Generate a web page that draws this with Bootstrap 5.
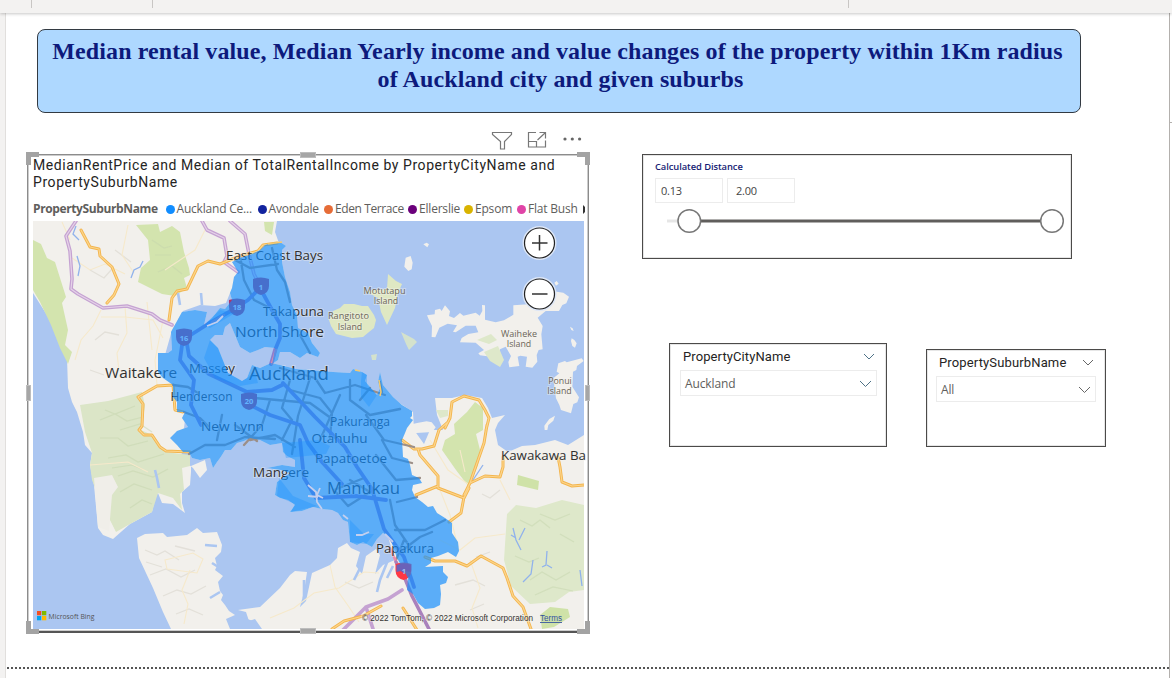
<!DOCTYPE html>
<html lang="en">
<head>
<meta charset="utf-8">
<meta name="viewport" content="width=device-width, initial-scale=1">
<title>Auckland rental report</title>
<link href="https://cdn.jsdelivr.net/npm/bootstrap@5.3.0/dist/css/bootstrap.min.css" rel="stylesheet">
<style>
body{background:#fff;font-family:"Open Sans","Noto Sans",sans-serif;color:#252423;line-height:1.2}
.ribbon{height:13px;background:#f3f2f1;flex:none;box-shadow:0 1px 3px rgba(0,0,0,.22);z-index:2}
.ribbon i{width:1px;height:8px;background:#c8c6c4}
.gutter{width:6px;background:#f3f2f1;border-right:1px solid #e1dfdd}
.pane{width:3px;border-left:1px solid #b3b0ad}
.pane div{margin-top:109px;height:1px;background:#b3b0ad}
.banner{width:1044px;height:84px;margin:16px 0 0 31px;background:#aed8ff;border:1px solid #333a42;border-radius:8px;font:bold 24px/28px "Liberation Serif",serif;letter-spacing:.11px;color:#0d1a7c;padding:7px 3px 0 0;white-space:nowrap}
.banner span{padding-left:6px}
.lower{padding-left:21px;height:554px}
.visual{width:562px}
.tools{height:41px;padding:18px 6px 0 0;gap:14px}
.frame{height:479px;border:1px solid #8c8c8c;border-bottom:2px solid #555;box-shadow:inset 0 0 0 1px #ccc;padding:2px 3px 0 5px}
.hnd{position:absolute;background:#a6a6a6;border:1px solid #bdbdbd}
.cnr{position:absolute;width:13px;height:13px;border:0 solid #a3a3a3}
.din{font-family:Roboto,sans-serif;font-size:14px;line-height:17px;letter-spacing:.57px}
.legendrow{height:18px;font-size:12px;line-height:18px;color:#605e5c;margin-top:9px;letter-spacing:-.2px}
.legendrow b{letter-spacing:-.38px}
.dot{width:9px;height:9px;border-radius:50%;margin-right:2px;flex:none}
.side{margin-left:53px;padding-top:41px}
.box{border:1px solid #4b4a49;outline:1px solid #e6e6e6;outline-offset:-2px;background:#fff}
.dist{width:430px;height:105px;padding:5px 7px 0 12px}
.dist label{font-size:9.4px;line-height:14px;font-weight:600;color:#151b73;letter-spacing:-.08px}
.num{width:68px;height:25px;border:1px solid #ececec;font-size:11px;line-height:23px;padding-left:5px;color:#444;letter-spacing:-.25px}
.city{width:218px;height:104px;margin-left:27px;padding:4px 9px 0 10px}
.suburb{width:180px;height:98px;margin:6px 0 0 39px;padding:4px 9px 0 9px}
.pick{height:26px;border:1px solid #ececec;font-size:12px;color:#605e5c;padding:2px 4px 0 4px;margin-top:4px;letter-spacing:-.13px}
.pick span{padding-top:1px}
.hd{padding:0 2px 0 3px;font-size:13px;letter-spacing:.14px;line-height:18px}
.city .hd{letter-spacing:.1px}
.cut{border-top:2px dotted #555;margin-left:1px}
svg text{font-family:"Open Sans","Noto Sans",sans-serif}
.halo{paint-order:stroke;stroke:#f5f3ee;stroke-width:2px;stroke-opacity:.4}
.credit text{font-family:"Liberation Sans",sans-serif}
</style>
</head>
<body class="d-flex flex-column vh-100 overflow-hidden">
<header class="ribbon d-flex position-relative"><i style="margin-left:31px"></i><i style="margin-left:120px"></i><i style="margin-left:695px"></i></header>
<div class="d-flex flex-grow-1">
<div class="gutter"></div>
<main class="flex-grow-1">
<h1 class="banner text-center mb-0">Median rental value, Median Yearly income and value changes of the property within 1Km radius<br><span>of Auckland city and given suburbs</span></h1>
<div class="lower d-flex">
<section class="visual">
<div class="tools d-flex justify-content-end align-items-start">
<svg width="22" height="20" fill="none" stroke="#777"><path d="M1.500 1.500h19v2l-7 7v7.500h-4v-7.500l-8-7z" stroke-width="1.200"/></svg>
<svg width="20" height="18" fill="none" stroke="#777" stroke-width="1.200"><path d="M9 1.500H1.500v14.500h17V9.500M1.500 10.500h8V16M10.500 9L18 2M12.500 1.500h6v6"/></svg>
<svg width="22" height="18" fill="#666"><circle cx="4" cy="8" r="1.600"/><circle cx="11.300" cy="8" r="1.600"/><circle cx="18.600" cy="8" r="1.600"/></svg>
</div>
<div class="frame position-relative">
<div class="din">MedianRentPrice and Median of TotalRentalIncome by PropertyCityName and<br>PropertySuburbName</div>
<div class="legendrow d-flex align-items-center text-nowrap overflow-hidden">
<b style="width:132.500px">PropertySuburbName</b>
<span class="dot" style="background:#118dff"></span><span style="width:81px">Auckland Ce...</span>
<span class="dot" style="background:#12239e"></span><span style="width:55.500px">Avondale</span>
<span class="dot" style="background:#e66c37"></span><span style="width:73px;letter-spacing:-.4px">Eden Terrace</span>
<span class="dot" style="background:#6b007b"></span><span style="width:45px">Ellerslie</span>
<span class="dot" style="background:#d9b300"></span><span style="width:42px">Epsom</span>
<span class="dot" style="background:#e044a7"></span><span style="width:53px">Flat Bush</span>
<svg width="4" height="9"><path d="M2 0v9l2-2V2z" fill="#333"/></svg>
</div>
<svg class="d-block overflow-visible" style="margin-top:3px" width="551" height="408" viewBox="33 221 551 408">
<defs><clipPath id="edge"><path d="M33 221h551v408H33z"/></clipPath>
<path id="area" d="M240 258L252 254 260 250 265 245 272 243 280 242 286 246 282 250 282 262 285 277 290 292 292 305 297 315 298 328 308 333 312 343 320 353 318 357 307 353 300 358 290 352 280 352 278 360 272 364 275 348 265 347 258 350 250 353 240 347 235 335 230 323 225 327 223 335 215 335 210 340 218 348 222 358 228 373 242 381 247 378 252 365 260 368 271 363 280 365 296 369 310 370 333 372 350 373 353 369 362 372 367 375 365 381 371 388 377 395 380 388 378 382 380 372 383 385 393 397 402 405 412 411 412 416 410 418 413 420 407 428 405 433 402 440 403 457 408 459 410 465 412 475 419 478 422 483 413 485 412 490 415 497 422 502 428 507 433 506 437 513 445 518 452 523 452 533 458 542 459 551 456 557 448 552 438 556 431 558 431 563 425 567 443 566 443 572 448 577 446 583 440 585 441 594 440 605 434 608 425 609 418 603 413 594 407 590 408 578 402 567 397 558 390 538 383 533 377 539 372 547 363 542 357 545 350 542 348 522 343 520 338 513 332 510 322 509 313 507 302 511 290 512 295 505 288 500 280 498 275 495 277 482 290 473 281 470 267 468 282 465 295 467 295 460 287 456 283 452 282 443 270 445 260 440 250 438 244 441 237 443 231 450 225 450 222 455 220 458 217 462 213 468 210 458 200 460 192 458 189 452 183 452 177 445 170 438 177 431 188 427 182 418 185 412 177 412 177 402 173 397 173 385 163 378 158 372 158 353 168 353 172 350 171 332 182 312 195 310 207 312 204 325 212 318 220 308 225 309 232 300 230 293 232 288 234 277 238 272 232 262z"/></defs>
<rect x="33" y="221" width="551" height="408" fill="#abc6f1"/>
<g clip-path="url(#edge)">
<g fill="#f2f0ec">
<path d="M33 221L277 221 275 232 280 246 262 262 238 272 236 282 230 293 226 303 215 306 200 305 183 311 172 330 165 355 182 378 186 412 184 428 180 445 183 460 193 468 200 478 207 470 205 460 191 466 191 472 190 485 182 492 182 503 185 513 173 504 162 503 158 493 155 498 152 512 130 524 113 539 103 535 98 528 94 485 90 465 92 453 85 445 83 432 77 412 72 402 68 388 67 358 63 347 47 315 33 293z"/>
<path d="M137 538L145 534 163 533 167 537 187 535 197 528 203 533 217 532 222 545 221 552 215 558 217 566 215 570 223 576 218 582 220 591 223 595 221 600 225 605 229 611 235 615 226 619 230 629 171 629 163 612 153 588 139 558z"/>
<path d="M238 610L260 607 280 588 290 575 295 571 307 572 304 592 300 607 306 601 312 573 330 565 337 558 338 548 347 543 351 548 360 552 356 566 362 574 366 556 376 549 380 555 375 574 383 565 395 560 380 510 395 400 413 412 414 430 424 444 430 430 443 430 437 415 435 398 452 398 465 395 482 398 488 408 492 418 505 415 498 423 495 430 498 445 508 452 522 446 535 445 555 440 568 445 584 435 584 629 262 629 255 619 249 621 246 612z"/>
<use href="#area" fill="#e9e9e9"/>
</g>
<g transform="translate(395 215) scale(.33333)" fill="#f2f0ec">
<path d="M120 285l15-4 5 7 10-17 15 18-3 14 15 6 18-15 10 8 37-9 12 9 8-14-1-18 9 1 0 43 32 8 25-6 28-17 0-28 45-3 30-20 40-20 35 5 17 12-8 20-12 5-10 18-40 0-24 20 15 25-4 25 4 45-12 2-6 15 2 20-15 18-20-3 4-30-20-3-8 3 5 28-30 4-3-16 8-18-16-28-17 8-5 25-55-7-5-6 17-10-25-22-47-1 5-13 20-12 30-5-8-20-30 0-30 20-8-2 12-19-28-5-25 12-12 29-11-1 1-33-10-20-5-12 23-3z"/>
<path d="M490 445l20-7 5 4 45-12 6 8-20 15-2 12-10 5-2 45 20 32-5 15-12 5-7 28-30-10-5-15-10-20-8-60 18-15-8-5z"/>
<path d="M32 128l15-5 6 20-3 20-10 5-12-13zM85 88l10-5 7 5-5 9zM478 203l7-5 6 8-8 6zM525 335l8 5 3 8-7-3zM530 370l8 5 7 10-5 13-8-5-4-15zM448 632l15-20 17-10-5 15-15 13-3 15-8 0zM50 628l20-5 25-4 15 3 12 15-10 14-60 4z"/>
</g>
<g fill="#dfe8c3"><path d="M329 320l3-5 1-4 7-3 4-4 10 0 8 2 6 0 6 9 2 5-2 8-5 4-6 5-11 1-8-2-8-2-5-8z"/><path d="M365 291l22-2 1-15 8 7 6 3-4 9-3 15-8 17-6-13-3-14z"/><path d="M401 332l13 7 3 3-8 8-3-6zM371 355l6-1-1 6-4 0z" opacity=".8"/></g>
<g fill="#d3e4ae">
<path d="M33 240L41 244 47 258 55 262 66 297 62 303 68 330 65 345 72 352 68 364 60 348 51 325 40 302 33 290z"/>
<path d="M136 225L158 224 160 232 172 226 180 232 184 252 189 268 190 275 184 278 187 288 175 296 162 294 138 282 141 268 150 260 148 240z"/>
<path d="M264 222l10 0-2 13-7-4z"/>
<path d="M467 412L475 402 483 408 483 430 476 434 480 450 478 465 469 487 456 470 442 450 445 440 455 434 454 424z"/>
</g>
<path d="M80 405L108 401 142 392 145 406 141 430 154 436 165 452 190 455 190 466 182 468 184 490 180 494 182 510 173 498 158 493 152 512 130 524 116 532 109 518 108 505 96 490 92 480 90 465 92 453 85 432z" fill="#dbe5c7"/>
<path d="M94 478l18-3 6 12-6 8 -3 36-11-4z" fill="#f0eee9"/>
<g fill="#dee8ca"><path d="M507 514L516 505 536 508 562 500 584 505 584 590 569 592 555 602 530 604 511 586 504 560z"/><path d="M518 475l21 6-1 9-21-5z" fill="#cfe2a8"/><path d="M540 615l10-8 18 2 2 8-16 10-12 2z" fill="#cfe2a8"/><path d="M436 410l12 0 0 6-8 2zM477 340l14-6 6 6-8 4zM484 352l14-6 6 14-4 7-10-6z"/></g>
<g fill="none" stroke="#c5d5ae" stroke-width="1.200" opacity=".5"><path d="M100 420l15-6 12 7 16-4M100 438l18 0 10 8 20-5M108 458l18-3 12 7 26-8M118 476l15-5 20 6 15-8M120 492l14-8 18 6M130 508l12-8 10 4M105 410l10 4 20-8M120 430l20-6 12 8M112 468l20-3 10 4M520 520l12 6 8-6 10 8M540 514l15 6 15-6M530 580l12-8 14 8 14-8M535 595l18-8 20 4M515 556l14 6 10-4M560 534l14 8M152 240l12 8 8-2M158 272l14-6 10 8M155 255l16 0"/></g>
<g fill="none" stroke="#e3e0d9" stroke-width="1.300"><path d="M145 550l12 5 8-4 14 9M150 575l16-6 15 8 14-7M163 596l14-6 14 4 15-8M176 614l13-5 14 6M90 270l14 8 8-9M95 340l10-8 14 3M90 370l14 5M500 490l-10 8-8-4M455 585l18-5 12 6M470 610l14-6M115 250l16 12M490 552l-14 5M345 582l14 6 14-6M146 562l16 5M175 546l20 5"/></g>
<!-- minor roads -->
<g fill="none" stroke="#f6e9cb" stroke-width="1.100"><path d="M101 310l-8 16-12 14-6 20M101 317l24 0 28 3 10 18M125 307l2 26-10 20 2 18M72 258l18 12 15-6 20 10M128 225l-6 30 12 18M62 222l8 18M147 302l5 48M163 320l-8 40 2 25M205 230l-10 20-30 20M90 465l38-3 20 10M165 560l28-7 10 6-6 14-30-4zM190 570l-8 20 6 14-4 20M270 618l24-10 20-15 25-5 25-16 15 1M330 565l5 22 14 20 10 15M440 490l10 25 8 32M460 450l5 22M440 540l20 10 15-12 30-4M470 560l10 28-8 20 6 20M500 480l10 20M430 440l18 30 20 14"/></g>
<g fill="none" stroke="#90b2ec" stroke-width="1.300"><path d="M76 226l-3 8 6 6M77 256l3 10-2 10M131 278l3-8 6-3 3-6M513 528l3 12 5 10M525 528l-6 12M516 538l-5-3M547 551l-1 14-4 2M552 568l-5-3M533 560l-2 14-8 8M580 570l2 16M483 465l-10 15"/><path d="M155 470l2 8 2 10M363 550l-3 18-6 12M388 560l-8 20-3 12M393 566l-6 12M304 580l0 18M178 293l2 12M201 293l1 12M205 545l12 1M212 563l8 5M210 598l10-6M240 618l12 4" stroke="#abc6f1" stroke-width="2.600"/></g>
<!-- highways -->
<g fill="none" stroke-linejoin="round" stroke-linecap="round">
<g stroke="#c5a2d2" stroke-width="3.600"><path id="mway" d="M76 221l-10 15 4 15 2 28-1 10 7 5 25 14 24-2 25 8 8 6 12 5M202 221l5 9 17 8 3 18 -3 6 14 10M230 221l15 13 4 20 5 20 6 12"/><path d="M336 637l30-30 22-8 14-9M366 607l8 25"/></g>
<use href="#mway" stroke="#e5d3e8" stroke-width="1.200"/>
<g stroke="#f3b54e" stroke-width="3"><path id="hway" d="M81 230l9 17 9 2 1 7 12 11 7 17-5 11-7 8M169 320l3-22 5-7 10-2 11-23 10-5 12 3 20-8 18-5 5-6 14-2M173 385l-16 1-19 11 5 7 -1 22-3 4 5 5 8 0 8 12 6 4 24 1M173 385l2 25 8 2M445 428l5-10 2-16 12-6 15 4 6 10 4 8-3 12M487 425l-3 18-14 40-6 12M470 483l15-7 15 1 3-10 0-10M402 440l12 9 8 0 12-3 5-16 9-8M418 449l2 6 18 21 0 12 26 10 5-10M438 486l-22 9M464 497l-3 16-12 9M425 557l10 4 20 0 12 5 14-10 22 12 4 10 6 18 10 11 8 22M558 457l2 10 2 15 10 4 12-1M332 629l12-8 19-5 18-10M403 608l14 22"/></g>
<use href="#hway" stroke="#fcd58c" stroke-width="1.200"/>
<g stroke="#9c8f88" stroke-width="2.300"><path d="M173 385l15 2 10 6M184 412l16 6 8 8M189 454l16-9 20 0 20-8 30 2M280 368l35 10 10 15 30-8 30 10M250 440l25-5 20 12M290 390l30 8 12 15-2 25M240 255l4 25 10 20 20 10M272 248l5 22 8 12 5 20M235 260l15 8 28-4M350 380l0 20 20 15 30-6M366 415l18 25 30 7M376 455l20 25 24-2M350 480l20 12-22 14-14-16 30-12M390 500l5 25 15 22M397 502l20-5M412 463l-20-5-10-18M395 530l30 0 20-10M400 552l20-15 12-5M290 380l-8 28 10 12-10 20M255 398l55 5 25 18M310 378l-12 38-6 38M270 400l-8 25-18 20M340 395l-20 45M235 425l22 16M222 415l-5 25M300 335l10 18M380 382l2 10M404 540l-8 20M360 400l10-12"/></g>
<g stroke="#8a7fce" stroke-width="3.800"><path d="M260 288l-12 12-12 8-28 16-22 14 3 18 20 18 38 18 25-2 12-6M260 288l12 22 8 14 0 14-5 12-4 14M250 405l20 10 30 10 8 18 14 19 20 22M283 383l32 34 30 30 12 20 15 22 12 40 20 28 10 30M183 338l-3 22 14 20-3 25 10 20M300 440l4 38 12 20 40-2 30 4"/></g>
<path d="M212 322l12-7M276 350l-4 14M390 548l8 18M230 301l6 4" stroke="#ef8aa8" stroke-width="2.500"/>
<path d="M396 562l8 14 8 20 18 35" stroke="#a981bc" stroke-width="3.500"/>
</g>
<g fill="#b0356b"><path id="shield" d="M253 279q8-3 16 0v7q0 7-8 9q-8-2-8-9z"/><use href="#shield" x="-24" y="21"/><use href="#shield" x="-77" y="51"/><use href="#shield" x="-12" y="115"/><path d="M395.500 564q8-3 16 0v6q0 8-8 10q-8-2-8-10z" fill="#ff3844"/></g>
<g font-weight="700" font-size="7.500" fill="#fff" text-anchor="middle"><text x="261" y="289.500">1</text><text x="237" y="310">18</text><text x="184" y="340.500">16</text><text x="249" y="404">20</text></g>
</g>
<!-- place names sit beneath the shaded area -->
<g fill="#303030" class="halo" font-size="13">
<text x="226" y="260" textLength="97" lengthAdjust="spacingAndGlyphs">East Coast Bays</text>
<text x="263" y="315.500" textLength="61" lengthAdjust="spacingAndGlyphs">Takapuna</text>
<text x="235" y="336.500" font-size="14.500" textLength="89" lengthAdjust="spacingAndGlyphs">North Shore</text>
<text x="105" y="377.500" font-size="14.500" textLength="72" lengthAdjust="spacingAndGlyphs">Waitakere</text>
<text x="189" y="373" textLength="46" lengthAdjust="spacingAndGlyphs">Massey</text>
<text x="249" y="379.500" font-size="18.500" textLength="80" lengthAdjust="spacingAndGlyphs">Auckland</text>
<text x="170.500" y="401" font-size="12" textLength="62" lengthAdjust="spacingAndGlyphs">Henderson</text>
<text x="201" y="431" textLength="63" lengthAdjust="spacingAndGlyphs">New Lynn</text>
<text x="330" y="426" font-size="12" textLength="60" lengthAdjust="spacingAndGlyphs">Pakuranga</text>
<text x="311.500" y="443" textLength="56" lengthAdjust="spacingAndGlyphs">Otahuhu</text>
<text x="315" y="463" textLength="72" lengthAdjust="spacingAndGlyphs">Papatoetoe</text>
<text x="253" y="477" textLength="56" lengthAdjust="spacingAndGlyphs">Mangere</text>
<text x="327" y="494" font-size="16" textLength="73" lengthAdjust="spacingAndGlyphs">Manukau</text>
<text x="376" y="553" textLength="58" lengthAdjust="spacingAndGlyphs">Papakura</text>
<text x="501" y="460" textLength="85" lengthAdjust="spacingAndGlyphs">Kawakawa Ba</text>
</g>
<g fill="#6b6558" class="halo" font-size="8.800" text-anchor="middle">
<text x="384.500" y="293.500" textLength="42" lengthAdjust="spacingAndGlyphs">Motutapu</text><text x="386" y="304">Island</text><text x="348.500" y="319" textLength="41" lengthAdjust="spacingAndGlyphs">Rangitoto</text><text x="350" y="329.500">Island</text><text x="519" y="336.500" textLength="36" lengthAdjust="spacingAndGlyphs">Waiheke</text><text x="519" y="347">Island</text><text x="560" y="383.500">Ponui</text><text x="559.500" y="394">Island</text>
</g>
<use href="#area" fill="#118dff" fill-opacity=".66"/>
<g fill="#118dff" opacity=".3"><path d="M210 340L218 348 222 358 228 373 242 381 247 378 255 372 258 383 240 386 215 378 204 358zM204 325L220 310 235 313 210 328zM362 372l5 3 0 10 10 10-8 12-8-10 0-16zM282 443l36-3 12 6-4 8-40 4zM279 478l14 18 24 10-26 6 4-8-18-8zM350 520l14 14 10 0-8 10-16-2z"/></g>
<path d="M396.500 565q7.500-3 14.500 0v7l-4.500-1-3 2-3-2-4 1z" fill="#6b62b8"/><text x="404" y="573.500" font-weight="700" font-size="7.500" fill="#9dc3f5" text-anchor="middle">1</text>
<g fill="none" stroke="#c3cfee" stroke-width="1.800"><path d="M308 485l8 7 1 10 5 7M320 488l-3 7 6 3M308 496l10 1M343 515l5 4M356 535l6 0 7-3M385 534l8 8M207 326l10-4 6-6"/></g>
<path d="M379 380l2 12-1 4M355 370l5 1M268 244l14-2" stroke="#f5c96f" fill="none" stroke-width="1.500"/>
<!-- zoom controls -->
<g fill="#fff" stroke="#dce6f7" stroke-width="3"><circle cx="539.500" cy="243" r="15.500"/><circle cx="539.500" cy="294" r="15.500"/></g>
<g fill="#fff" stroke="#222" stroke-width="1.200"><circle cx="539.500" cy="243" r="15"/><circle cx="539.500" cy="294" r="15"/></g>
<path d="M532 243h15.500M539.500 235v15.500M532 294h15.500" stroke="#333" stroke-width="1.500"/>
<path d="M37 611h4.300v4.300H37z" fill="#f25022"/><path d="M42 611h4.300v4.300H42z" fill="#7fba00"/><path d="M37 616h4.300v4.300H37z" fill="#00a4ef"/><path d="M42 616h4.300v4.300H42z" fill="#ffb900"/>
<text x="48.500" y="618.500" font-size="7.500" fill="#555" textLength="46" lengthAdjust="spacingAndGlyphs">Microsoft Bing</text>
<g class="credit" font-size="8.500" fill="#333"><text class="halo" x="362" y="621" textLength="171" lengthAdjust="spacingAndGlyphs">© 2022 TomTom, © 2022 Microsoft Corporation</text><text x="540" y="621" fill="#33529f" textLength="22" lengthAdjust="spacingAndGlyphs" text-decoration="underline">Terms</text></g>
</svg>
<span class="hnd" style="left:272px;top:-3px;width:16px;height:6px"></span><span class="hnd" style="left:272px;bottom:-3px;width:16px;height:6px"></span><span class="hnd" style="left:-2px;top:230px;width:5px;height:16px"></span><span class="hnd" style="right:-2px;top:230px;width:5px;height:16px"></span>
<span class="cnr" style="left:-2px;top:-3px;border-width:5px 0 0 5px"></span><span class="cnr" style="right:-2px;top:-3px;border-width:5px 5px 0 0"></span><span class="cnr" style="left:-2px;bottom:-3px;border-width:0 0 5px 5px"></span><span class="cnr" style="right:-2px;bottom:-3px;border-width:0 5px 5px 0"></span>
</div>
</section>
<section class="side">
<div class="box dist">
<label class="d-block">Calculated Distance</label>
<div class="d-flex" style="gap:4px;margin-top:4px"><div class="num">0.13</div><div class="num ps-2">2.00</div></div>
<svg class="d-block" style="margin:5px 0 0 10px" width="402" height="26"><path d="M2 13h14" stroke="#e6e6e6" stroke-width="3"/><path d="M24 13h363" stroke="#605e5c" stroke-width="3"/><g fill="#fff" stroke="#777" stroke-width="1.500"><circle cx="24.300" cy="13" r="11.300"/><circle cx="387" cy="13" r="11.300"/></g></svg>
</div>
<div class="d-flex" style="margin-top:84px">
<div class="box city"><div class="hd din d-flex justify-content-between align-items-center">PropertyCityName<svg width="12" height="8" fill="none" stroke="#4f7287"><path d="M1 1l5 5 5-5"/></svg></div>
<div class="pick d-flex justify-content-between align-items-center"><span>Auckland</span><svg width="13" height="8" fill="none" stroke="#4f7287"><path d="M1 1l5.500 5.500L12 1"/></svg></div></div>
<div class="box suburb"><div class="hd din d-flex justify-content-between align-items-center">PropertySuburbName<svg width="12" height="8" fill="none" stroke="#666"><path d="M1 1l5 5 5-5"/></svg></div>
<div class="pick d-flex justify-content-between align-items-center"><span>All</span><svg width="13" height="8" fill="none" stroke="#666"><path d="M1 1l5.500 5.500L12 1"/></svg></div></div>
</div>
</section>
</div>
<div class="cut"></div>
</main>
<aside class="pane"><div></div></aside>
</div>
<script src="https://cdn.jsdelivr.net/npm/bootstrap@5.3.0/dist/js/bootstrap.bundle.min.js"></script>
</body>
</html>
